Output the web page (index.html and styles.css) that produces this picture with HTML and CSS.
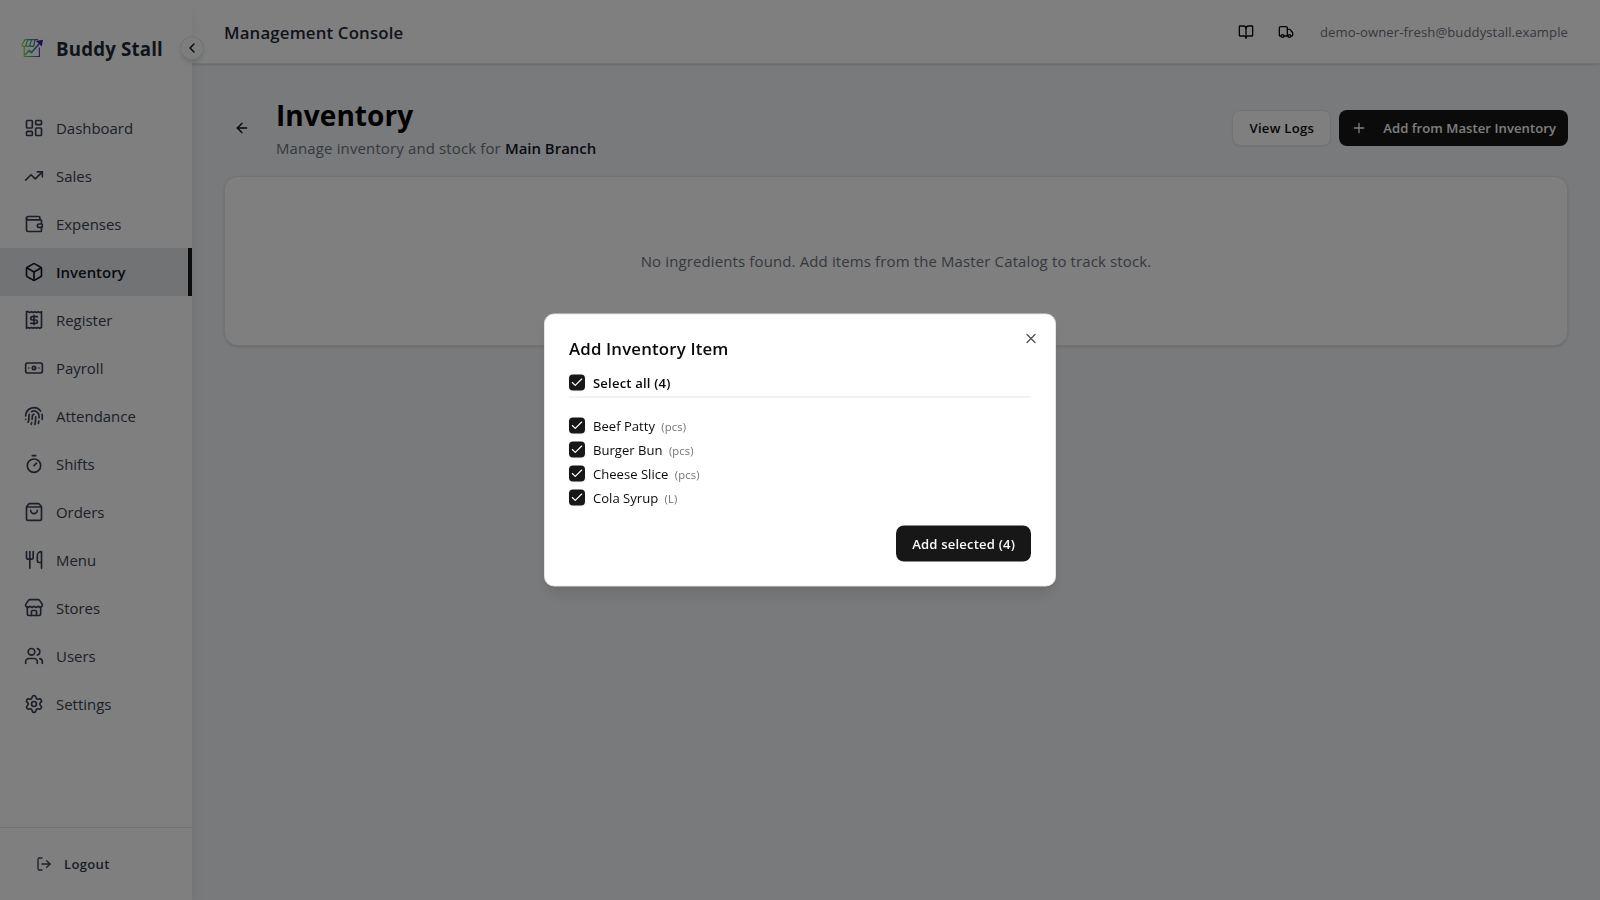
FILE: index.html
```html
<!DOCTYPE html>
<html lang="en">

<head>
  <meta charset="UTF-8">
  <meta name="viewport" content="width=device-width, initial-scale=1.0">
  <title>Inventory - Buddy Stall</title>
  <link rel="stylesheet" href="styles.css">
</head>

<body>
  <div class="app">
    <aside class="sidebar">
      <div class="brand">
        <svg class="brand-logo" viewBox="0 0 24 24" fill="none" stroke="url(#brand-gradient)" stroke-width="1.200" stroke-linejoin="round">
          <defs>
            <linearGradient id="brand-gradient" gradientUnits="userSpaceOnUse" x1="2" y1="12" x2="21" y2="10">
              <stop offset="0" stop-color="#8be03c" />
              <stop offset="0.5" stop-color="#35a08c" />
              <stop offset="1" stop-color="#5a30b8" />
            </linearGradient>
          </defs>
          <path d="M18 3.600H5L2.200 8.500c0 1.300.8 2 1.900 2s2-.7 2-2c0 1.300.8 2 2 2s2-.7 2-2c0 1.300.8 2 2 2s2-.7 2-2" />
          <path d="M8 3.600 6.100 8.500M11.500 3.600 10.100 8.500M15 3.600 14.100 8.500" />
          <path d="M4.200 10.800v9.700h15.200v-9" />
          <path d="m5 19 4-4.500 2.500 2L19 8" stroke-width="1.700" />
          <path d="m16 5 7-1.200-1.300 6.700z" fill="#38209a" stroke="none" />
        </svg>
        <span class="brand-name">Buddy Stall</span>
      </div>

      <nav class="nav">
        <a class="nav-item">
          <svg class="icon" viewBox="0 0 24 24"><rect x="3" y="3" width="7" height="9" rx="1" /><rect x="14" y="3" width="7" height="5" rx="1" /><rect x="14" y="12" width="7" height="9" rx="1" /><rect x="3" y="16" width="7" height="5" rx="1" /></svg>
          <span>Dashboard</span>
        </a>
        <a class="nav-item">
          <svg class="icon" viewBox="0 0 24 24"><path d="M16 7h6v6" /><path d="m22 7-8.500 8.500-5-5L2 17" /></svg>
          <span>Sales</span>
        </a>
        <a class="nav-item">
          <svg class="icon" viewBox="0 0 24 24"><path d="M19 7V4a1 1 0 0 0-1-1H5a2 2 0 0 0 0 4h15a1 1 0 0 1 1 1v4h-3a2 2 0 0 0 0 4h3a1 1 0 0 0 1-1v-2a1 1 0 0 0-1-1" /><path d="M3 5v14a2 2 0 0 0 2 2h15a1 1 0 0 0 1-1v-4" /></svg>
          <span>Expenses</span>
        </a>
        <a class="nav-item active">
          <svg class="icon" viewBox="0 0 24 24"><path d="M21 8a2 2 0 0 0-1-1.730l-7-4a2 2 0 0 0-2 0l-7 4A2 2 0 0 0 3 8v8a2 2 0 0 0 1 1.730l7 4a2 2 0 0 0 2 0l7-4A2 2 0 0 0 21 16Z" /><path d="m3.300 7 8.700 5 8.700-5" /><path d="M12 22V12" /></svg>
          <span>Inventory</span>
        </a>
        <a class="nav-item">
          <svg class="icon" viewBox="0 0 24 24"><path d="M3 2v20l2-1 2 1 2-1 2 1 2-1 2 1 2-1 2 1 2-1V2l-2 1-2-1-2 1-2-1-2 1-2-1-2 1-2-1Z" /><path d="M16 8h-6a2 2 0 1 0 0 4h4a2 2 0 1 1 0 4H8" /><path d="M12 17.500v-11" /></svg>
          <span>Register</span>
        </a>
        <a class="nav-item">
          <svg class="icon" viewBox="0 0 24 24"><rect x="2" y="6" width="20" height="12" rx="2" /><circle cx="12" cy="12" r="2" /><path d="M6 12h.01M18 12h.01" /></svg>
          <span>Payroll</span>
        </a>
        <a class="nav-item">
          <svg class="icon" viewBox="0 0 24 24"><path d="M12 10a2 2 0 0 0-2 2c0 1.020-.1 2.510-.26 4" /><path d="M14 13.120c0 2.380 0 6.380-1 8.880" /><path d="M17.290 21.020c.12-.6.43-2.300.5-3.020" /><path d="M2 12a10 10 0 0 1 18-6" /><path d="M2 16h.01" /><path d="M21.800 16c.2-2 .131-5.354 0-6" /><path d="M5 19.500C5.500 18 6 15 6 12a6 6 0 0 1 .34-2" /><path d="M8.650 22c.21-.66.45-1.320.57-2" /><path d="M9 6.800a6 6 0 0 1 9 5.200v2" /></svg>
          <span>Attendance</span>
        </a>
        <a class="nav-item">
          <svg class="icon" viewBox="0 0 24 24"><path d="M10 2h4" /><path d="m12 14 3-3" /><circle cx="12" cy="14" r="8" /></svg>
          <span>Shifts</span>
        </a>
        <a class="nav-item">
          <svg class="icon" viewBox="0 0 24 24"><path d="M16 10a4 4 0 0 1-8 0" /><path d="M3.103 6.034h17.794" /><path d="M3.400 5.467a2 2 0 0 0-.4 1.200V20a2 2 0 0 0 2 2h14a2 2 0 0 0 2-2V6.667a2 2 0 0 0-.4-1.200l-2-2.667A2 2 0 0 0 17 2H7a2 2 0 0 0-1.600.8z" /></svg>
          <span>Orders</span>
        </a>
        <a class="nav-item">
          <svg class="icon" viewBox="0 0 24 24"><path d="M3 2v7c0 1.100.9 2 2 2h4a2 2 0 0 0 2-2V2" /><path d="M7 2v20" /><path d="M21 15V2a5 5 0 0 0-5 5v6c0 1.100.9 2 2 2h3Zm0 0v7" /></svg>
          <span>Menu</span>
        </a>
        <a class="nav-item">
          <svg class="icon" viewBox="0 0 24 24"><path d="M15 21v-5a1 1 0 0 0-1-1h-4a1 1 0 0 0-1 1v5" /><path d="M17.774 10.310a1.120 1.120 0 0 0-1.549 0 2.500 2.500 0 0 1-3.451 0 1.120 1.120 0 0 0-1.548 0 2.500 2.500 0 0 1-3.452 0 1.120 1.120 0 0 0-1.549 0 2.500 2.500 0 0 1-3.770-3.248l2.889-4.184A2 2 0 0 1 7 2h10a2 2 0 0 1 1.653.873l2.895 4.192a2.500 2.500 0 0 1-3.774 3.244" /><path d="M4 10.950V19a2 2 0 0 0 2 2h12a2 2 0 0 0 2-2v-8.050" /></svg>
          <span>Stores</span>
        </a>
        <a class="nav-item">
          <svg class="icon" viewBox="0 0 24 24"><path d="M16 21v-2a4 4 0 0 0-4-4H6a4 4 0 0 0-4 4v2" /><circle cx="9" cy="7" r="4" /><path d="M22 21v-2a4 4 0 0 0-3-3.870" /><path d="M16 3.130a4 4 0 0 1 0 7.750" /></svg>
          <span>Users</span>
        </a>
        <a class="nav-item">
          <svg class="icon" viewBox="0 0 24 24"><path d="M9.671 4.136a2.340 2.340 0 0 1 4.659 0 2.340 2.340 0 0 0 3.319 1.915 2.340 2.340 0 0 1 2.330 4.033 2.340 2.340 0 0 0 0 3.831 2.340 2.340 0 0 1-2.330 4.033 2.340 2.340 0 0 0-3.319 1.915 2.340 2.340 0 0 1-4.659 0 2.340 2.340 0 0 0-3.320-1.915 2.340 2.340 0 0 1-2.330-4.033 2.340 2.340 0 0 0 0-3.831A2.340 2.340 0 0 1 6.350 6.051a2.340 2.340 0 0 0 3.319-1.915" /><circle cx="12" cy="12" r="3" /></svg>
          <span>Settings</span>
        </a>
      </nav>

      <div class="sidebar-footer">
        <a class="logout">
          <svg class="icon icon-sm" viewBox="0 0 24 24"><path d="M9 21H5a2 2 0 0 1-2-2V5a2 2 0 0 1 2-2h4" /><path d="m16 17 5-5-5-5" /><path d="M21 12H9" /></svg>
          <span>Logout</span>
        </a>
      </div>

      <div class="collapse-btn">
        <svg class="icon icon-sm" viewBox="0 0 24 24"><path d="m15 18-6-6 6-6" /></svg>
      </div>
    </aside>

    <div class="content">
      <header class="topbar">
        <div class="topbar-title">Management Console</div>
        <div class="topbar-right">
          <div class="topbar-icons">
            <span class="icon-btn">
              <svg class="icon icon-sm" viewBox="0 0 24 24"><path d="M12 7v14" /><path d="M3 18a1 1 0 0 1-1-1V4a1 1 0 0 1 1-1h5a4 4 0 0 1 4 4 4 4 0 0 1 4-4h5a1 1 0 0 1 1 1v13a1 1 0 0 1-1 1h-6a3 3 0 0 0-3 3 3 3 0 0 0-3-3z" /></svg>
            </span>
            <span class="icon-btn">
              <svg class="icon icon-sm" viewBox="0 0 24 24"><path d="M14 18V6a2 2 0 0 0-2-2H4a2 2 0 0 0-2 2v11a1 1 0 0 0 1 1h2" /><path d="M15 18H9" /><path d="M19 18h2a1 1 0 0 0 1-1v-3.650a1 1 0 0 0-.22-.624l-3.480-4.350A1 1 0 0 0 17.520 8H14" /><circle cx="17" cy="18" r="2" /><circle cx="7" cy="18" r="2" /></svg>
            </span>
          </div>
          <span class="user-email">demo-owner-fresh@buddystall.example</span>
        </div>
      </header>

      <main class="main">
        <div class="page-head">
          <span class="icon-btn">
            <svg class="icon icon-sm" viewBox="0 0 24 24"><path d="m12 19-7-7 7-7" /><path d="M19 12H5" /></svg>
          </span>
          <div class="page-title">
            <h1>Inventory</h1>
            <p>Manage inventory and stock for <strong>Main Branch</strong></p>
          </div>
          <div class="page-actions">
            <button class="btn btn-outline">View Logs</button>
            <button class="btn btn-primary btn-add">
              <svg class="icon icon-sm" viewBox="0 0 24 24"><path d="M5 12h14M12 5v14" /></svg>
              <span>Add from Master Inventory</span>
            </button>
          </div>
        </div>

        <div class="card">
          <p>No ingredients found. Add items from the Master Catalog to track stock.</p>
        </div>
      </main>
    </div>
  </div>

  <div class="overlay"></div>

  <div class="modal">
    <h2>Add Inventory Item</h2>

    <div class="select-all">
      <span class="checkbox"><svg class="icon" viewBox="0 0 24 24"><path d="M20 6 9 17l-5-5" /></svg></span>
      <span>Select all (4)</span>
    </div>

    <div class="item-list">
      <div class="item">
        <span class="checkbox"><svg class="icon" viewBox="0 0 24 24"><path d="M20 6 9 17l-5-5" /></svg></span>
        <span>Beef Patty <small>(pcs)</small></span>
      </div>
      <div class="item">
        <span class="checkbox"><svg class="icon" viewBox="0 0 24 24"><path d="M20 6 9 17l-5-5" /></svg></span>
        <span>Burger Bun <small>(pcs)</small></span>
      </div>
      <div class="item">
        <span class="checkbox"><svg class="icon" viewBox="0 0 24 24"><path d="M20 6 9 17l-5-5" /></svg></span>
        <span>Cheese Slice <small>(pcs)</small></span>
      </div>
      <div class="item">
        <span class="checkbox"><svg class="icon" viewBox="0 0 24 24"><path d="M20 6 9 17l-5-5" /></svg></span>
        <span>Cola Syrup <small>(L)</small></span>
      </div>
    </div>

    <div class="modal-footer">
      <button class="btn btn-primary btn-submit">Add selected (4)</button>
    </div>

    <svg class="icon icon-sm modal-close" viewBox="0 0 24 24"><path d="M18 6 6 18M6 6l12 12" /></svg>
  </div>
</body>

</html>
```
FILE: styles.css
```css
* {
  box-sizing: border-box;
}

body {
  margin: 0;
  font-family: 'Segoe UI', 'Open Sans', sans-serif;
  font-size: 16px;
  font-size-adjust: 0.5;
  line-height: 24px;
  color: #0a0a0a;
  background-color: #f3f4f6;
}

h1,
h2,
p {
  margin: 0;
}

.app {
  display: flex;
  height: 100vh;
  overflow: hidden;
}

.icon {
  display: block;
  width: 20px;
  height: 20px;
  flex-shrink: 0;
  fill: none;
  stroke: currentColor;
  stroke-width: 2;
  stroke-linecap: round;
  stroke-linejoin: round;
}

.icon-sm {
  width: 16px;
  height: 16px;
}

/* Sidebar */
.sidebar {
  position: relative;
  z-index: 1;
  display: flex;
  flex-direction: column;
  width: 192px;
  flex-shrink: 0;
  background-color: #fff;
  box-shadow: 0 10px 15px -3px rgba(0, 0, 0, 0.1), 0 4px 6px -4px rgba(0, 0, 0, 0.1);
}

.brand {
  display: flex;
  align-items: center;
  gap: 12px;
  height: 96px;
  padding-left: 20px;
}

.brand-logo {
  width: 24px;
  height: 24px;
}

.brand-name {
  padding-top: 2px;
  font-size: 20px;
  font-weight: 700;
  line-height: 28px;
  letter-spacing: 0.18px;
  color: #1f2937;
}

.nav {
  flex: 1;
  padding-top: 8px;
}

.nav-item {
  display: flex;
  align-items: center;
  gap: 12px;
  height: 48px;
  padding-left: 24px;
  color: #374151;
}

.nav-item.active {
  background-color: #e5e7eb;
  border-right: 4px solid #171717;
  color: #111827;
  font-weight: 600;
}

.sidebar-footer {
  padding: 16px;
  border-top: 1px solid #e5e7eb;
}

.logout {
  display: flex;
  align-items: center;
  gap: 12px;
  height: 40px;
  padding-left: 20px;
  font-size: 14px;
  font-weight: 600;
  letter-spacing: 0.3px;
  color: #374151;
}

.collapse-btn {
  position: absolute;
  top: 36px;
  right: -12px;
  display: flex;
  align-items: center;
  justify-content: center;
  width: 24px;
  height: 24px;
  border: 1px solid #e5e7eb;
  border-radius: 50%;
  background-color: #f9fafb;
  box-shadow: 0 4px 6px -1px rgba(0, 0, 0, 0.1), 0 2px 4px -2px rgba(0, 0, 0, 0.1);
}

/* Top bar */
.content {
  flex: 1;
}

.topbar {
  display: flex;
  align-items: center;
  justify-content: space-between;
  height: 64px;
  padding: 0 32px;
  background-color: #fff;
  border-bottom: 1px solid #e5e7eb;
  box-shadow: 0 1px 3px rgba(0, 0, 0, 0.1), 0 1px 2px -1px rgba(0, 0, 0, 0.1);
}

.topbar-title {
  padding-top: 2px;
  font-size: 18px;
  font-weight: 600;
  letter-spacing: 0.17px;
  color: #1f2937;
}

.topbar-right {
  display: flex;
  align-items: center;
  gap: 16px;
}

.topbar-icons {
  display: flex;
  gap: 4px;
}

.icon-btn {
  display: flex;
  align-items: center;
  justify-content: center;
  width: 36px;
  height: 36px;
}

.user-email {
  font-size: 14px;
  letter-spacing: 0.1px;
  color: #6b7280;
}

/* Page */
.main {
  display: flex;
  flex-direction: column;
  gap: 16px;
  padding: 32px;
}

.page-head {
  display: flex;
  align-items: center;
  gap: 16px;
}

.page-title {
  flex: 1;
}

.page-title h1 {
  margin-bottom: 4px;
  padding-top: 2px;
  font-size: 30px;
  font-weight: 700;
  line-height: 34px;
  letter-spacing: 0.05px;
  color: #000;
}

.page-title p {
  letter-spacing: 0.155px;
  color: #6b7280;
}

.page-title strong {
  font-weight: 600;
  letter-spacing: 0;
  color: #111827;
}

.page-actions {
  display: flex;
  gap: 8px;
}

.btn {
  display: flex;
  align-items: center;
  justify-content: center;
  height: 36px;
  padding: 0 16px;
  border: none;
  border-radius: 8px;
  font-family: inherit;
  font-size: 14px;
  font-size-adjust: inherit;
  font-weight: 600;
  line-height: 20px;
  letter-spacing: 0.18px;
}

.btn-outline {
  border: 1px solid #e5e5e5;
  background-color: #fff;
  color: #0a0a0a;
  box-shadow: 0 1px 2px rgba(0, 0, 0, 0.05);
  letter-spacing: 0.3px;
}

.btn-primary {
  background-color: #171717;
  color: #fafafa;
}

.btn-add {
  gap: 16px;
  padding: 0 12px;
  letter-spacing: 0.06px;
}

.card {
  padding: 72px 24px;
  border: 1px solid #e5e7eb;
  border-radius: 14px;
  background-color: #fff;
  box-shadow: 0 1px 3px rgba(0, 0, 0, 0.1), 0 1px 2px -1px rgba(0, 0, 0, 0.1);
  text-align: center;
  letter-spacing: 0.15px;
  color: #6b7280;
}

/* Modal */
.overlay {
  position: fixed;
  inset: 0;
  z-index: 10;
  background-color: rgba(0, 0, 0, 0.5);
}

.modal {
  position: fixed;
  top: 50%;
  left: 50%;
  z-index: 11;
  display: flex;
  flex-direction: column;
  gap: 16px;
  width: 512px;
  padding: 24px;
  border: 1px solid #e5e5e5;
  border-radius: 10px;
  background-color: #fff;
  box-shadow: 0 10px 15px -3px rgba(0, 0, 0, 0.1), 0 4px 6px -4px rgba(0, 0, 0, 0.1);
  transform: translate(-50%, -50%);
}

.modal h2 {
  padding-top: 2px;
  font-size: 18px;
  font-weight: 600;
  line-height: 16px;
  letter-spacing: 0.17px;
}

.select-all {
  display: flex;
  align-items: center;
  gap: 8px;
  padding-bottom: 4px;
  border-bottom: 1px solid #e5e5e5;
  font-size: 14px;
  font-weight: 600;
  line-height: 20px;
  letter-spacing: 0.18px;
}

.item {
  display: flex;
  align-items: center;
  gap: 8px;
  padding: 2px 0;
  font-size: 14px;
  line-height: 20px;
}

.item small {
  margin-left: 3px;
  font-size: 12px;
  line-height: 16px;
  letter-spacing: 0.15px;
  color: #737373;
}

.checkbox {
  display: flex;
  align-items: center;
  justify-content: center;
  width: 16px;
  height: 16px;
  border-radius: 4px;
  background-color: #171717;
  color: #fff;
  box-shadow: 0 1px 2px rgba(0, 0, 0, 0.05);
}

.checkbox .icon {
  width: 14px;
  height: 14px;
}

.modal-footer {
  display: flex;
  justify-content: flex-end;
}

.modal-close {
  position: absolute;
  top: 16px;
  right: 16px;
  opacity: 0.7;
}
```
